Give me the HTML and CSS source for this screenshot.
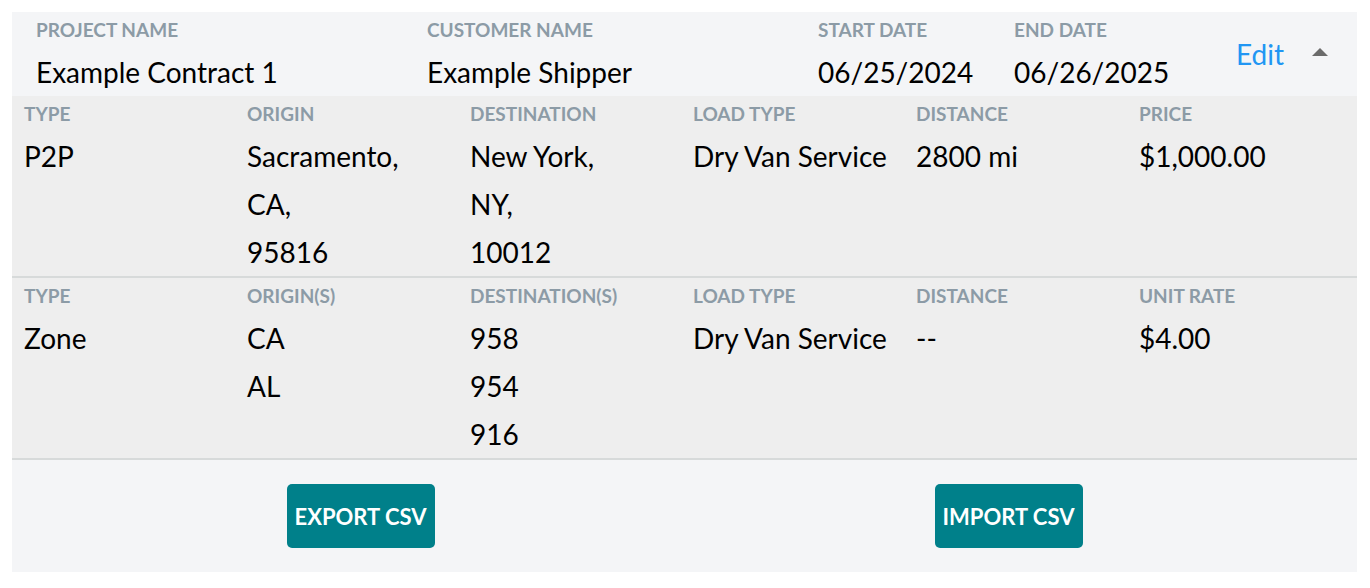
FILE: index.html
```html
<!DOCTYPE html>
<html lang="en">
<head>
    <meta charset="UTF-8">
    <meta name="viewport" content="width=device-width, initial-scale=1.0">
    <title>Contract</title>
    <link rel="stylesheet" href="styles.css">
</head>
<body>
    <div class="contract">
        <div class="contract-header">
            <div class="field">
                <div class="label">Project Name</div>
                <div class="value">Example Contract 1</div>
            </div>
            <div class="field">
                <div class="label">Customer Name</div>
                <div class="value">Example Shipper</div>
            </div>
            <div class="field">
                <div class="label">Start Date</div>
                <div class="value">06/25/2024</div>
            </div>
            <div class="field">
                <div class="label">End Date</div>
                <div class="value">06/26/2025</div>
            </div>
            <div class="actions">
                <a class="edit" href="#">Edit</a>
                <svg class="caret" width="16" height="8" viewBox="0 0 16 8"><path d="M0 8 L8 0 L16 8 Z" fill="#6b6b6b"/></svg>
            </div>
        </div>

        <div class="lane">
            <div class="field">
                <div class="label">Type</div>
                <div class="value">P2P</div>
            </div>
            <div class="field">
                <div class="label">Origin</div>
                <div class="value">Sacramento,</div>
                <div class="value">CA,</div>
                <div class="value">95816</div>
            </div>
            <div class="field">
                <div class="label">Destination</div>
                <div class="value">New York,</div>
                <div class="value">NY,</div>
                <div class="value">10012</div>
            </div>
            <div class="field">
                <div class="label">Load Type</div>
                <div class="value">Dry Van Service</div>
            </div>
            <div class="field">
                <div class="label">Distance</div>
                <div class="value">2800 mi</div>
            </div>
            <div class="field">
                <div class="label">Price</div>
                <div class="value">$1,000.00</div>
            </div>
        </div>

        <div class="lane">
            <div class="field">
                <div class="label">Type</div>
                <div class="value">Zone</div>
            </div>
            <div class="field">
                <div class="label">Origin(s)</div>
                <div class="value">CA</div>
                <div class="value">AL</div>
            </div>
            <div class="field">
                <div class="label">Destination(s)</div>
                <div class="value">958</div>
                <div class="value">954</div>
                <div class="value">916</div>
            </div>
            <div class="field">
                <div class="label">Load Type</div>
                <div class="value">Dry Van Service</div>
            </div>
            <div class="field">
                <div class="label">Distance</div>
                <div class="value">--</div>
            </div>
            <div class="field">
                <div class="label">Unit Rate</div>
                <div class="value">$4.00</div>
            </div>
        </div>

        <div class="contract-footer">
            <button class="btn">EXPORT CSV</button>
            <button class="btn">IMPORT CSV</button>
        </div>
    </div>
</body>
</html>
```

FILE: styles.css
```css
body {
    font-family: Lato, "Noto Sans", sans-serif;
    margin: 12px;
    background: #fff;
    color: #000;
}
.contract {
    width: 1345px;
}
.label {
    font-size: 19px;
    font-weight: bold;
    line-height: 20px;
    color: #8c9ba6;
    text-transform: uppercase;
    margin-bottom: 8px;
}
.value {
    font-size: 28px;
    line-height: 48px;
}
.contract-header {
    background: #f4f5f7;
    display: grid;
    grid-template-columns: 391px 391px 196px 1fr auto;
    align-items: center;
    padding: 8px 0 0 24px;
}
.contract-header .label {
    margin-bottom: 9px;
}
.contract-header .value {
    line-height: 47px;
}
.actions {
    display: flex;
    align-items: center;
    gap: 28px;
    padding-right: 29px;
    margin-top: -8px;
}
.caret {
    margin-top: -4px;
}
.edit {
    color: #2196f3;
    font-size: 28px;
    text-decoration: none;
}
.lane {
    background: #eeeeee;
    display: grid;
    grid-template-columns: repeat(6, 223px);
    padding: 8px 0 0 12px;
    border-bottom: 2px solid #d7dada;
}
.contract-footer {
    background: #f4f5f7;
    display: flex;
    justify-content: center;
    gap: 500px;
    padding: 24px 0;
}
.btn {
    width: 148px;
    height: 64px;
    background: #00808a;
    color: #fff;
    border: none;
    border-radius: 5px;
    font-family: Lato, sans-serif;
    font-weight: bold;
    font-size: 22px;
    cursor: pointer;
}
```
